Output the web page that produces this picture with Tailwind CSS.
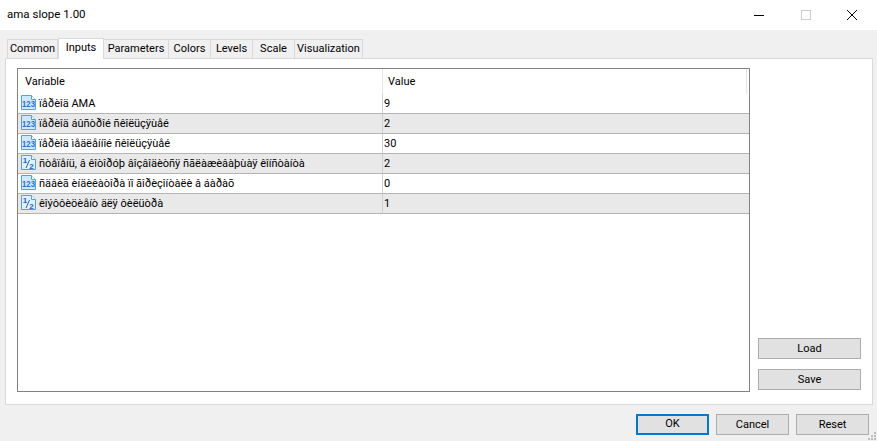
<!DOCTYPE html>
<html lang="en">
  <head>
    <meta charset="UTF-8" />
    <title>ama slope 1.00</title>
    <script src="https://cdn.jsdelivr.net/npm/@tailwindcss/browser@4"></script>
  </head>
  <body class="w-[877px] h-[441px] overflow-hidden bg-[#f0f0f0] text-black text-[11px] font-['Roboto','Noto_Sans',sans-serif]">
    <!-- title bar -->
    <header class="h-[30px] bg-white flex items-center pl-[7px]">
      <span class="text-[11.5px]">ama slope 1.00</span>
      <div class="ml-auto flex items-center">
        <svg width="12" height="12" viewBox="0 0 12 12" class="mr-[35px]"><path d="M1 6.5H11" stroke="#000" /></svg>
        <svg width="12" height="12" viewBox="0 0 12 12" class="mr-[34px]"><rect x="1.5" y="1.5" width="9" height="9" fill="none" stroke="#ccc" /></svg>
        <svg width="12" height="12" viewBox="0 0 12 12" class="mr-[19px]"><path d="M1 1L11 11M11 1L1 11" stroke="#000" /></svg>
      </div>
    </header>

    <main class="px-[5px] pt-[7px]">
      <!-- tabs -->
      <nav class="flex items-end h-[21px] pl-[2px] relative z-10">
        <button class="w-[51px] h-[19px] pt-px border border-b-0 border-[#d9d9d9] bg-[#f0f0f0]">Common</button>
        <button class="w-[46px] h-[21px] border border-b-0 border-[#d9d9d9] bg-white -mb-px pb-[2px]">Inputs</button>
        <button class="w-[65px] h-[19px] pt-px border-t border-r border-[#d9d9d9] bg-[#f0f0f0]">Parameters</button>
        <button class="w-[42px] h-[19px] pt-px border-t border-r border-[#d9d9d9] bg-[#f0f0f0]">Colors</button>
        <button class="w-[42px] h-[19px] pt-px border-t border-r border-[#d9d9d9] bg-[#f0f0f0]">Levels</button>
        <button class="w-[42px] h-[19px] pt-px border-t border-r border-[#d9d9d9] bg-[#f0f0f0]">Scale</button>
        <button class="w-[68px] h-[19px] pt-px border-t border-r border-[#d9d9d9] bg-[#f0f0f0]">Visualization</button>
      </nav>

      <section class="w-[868px] h-[347px] bg-white border border-[#d9d9d9] pl-[11px] pt-[9px] flex">
        <!-- inputs table -->
        <div class="w-[733px] h-[324px] border border-[#828282] bg-white">
          <div class="flex h-[25px] items-center">
            <div class="w-[364px] pl-[7px] pt-px">Variable</div>
            <div class="w-px h-full bg-[#e5e5e5]"></div>
            <div class="pl-[5px] pt-px">Value</div>
            <div class="ml-auto w-px h-full bg-[#e5e5e5] mr-[2px]"></div>
          </div>

          <div class="flex h-[20px] items-center border-b border-[#b4b4b4]">
            <div class="w-[364px] pl-[2px] flex items-center gap-[2px] whitespace-nowrap">
              <svg width="17" height="17" viewBox="0 0 17 17" class="-mt-[2px]"><path d="M1.5 1.5H11.5L15.5 5.5V15.5H1.5Z" fill="#cfe8fd" stroke="#4fa3e3" /><path d="M11.5 1.5V5.5H15.5" fill="#fff" stroke="#4fa3e3" /><text x="8.5" y="13" text-anchor="middle" font-size="8.5" font-weight="700" fill="#2f6fd0" textLength="13" lengthAdjust="spacingAndGlyphs" font-family="Liberation Sans">123</text></svg>
              <span class="pt-px">ïåðèîä AMA</span>
            </div>
            <div class="w-px h-full bg-[#d0d0d0]"></div>
            <div class="pl-[1px] pt-px">9</div>
          </div>
          <div class="flex h-[20px] items-center border-b border-[#b4b4b4] bg-[#e9e9e9]">
            <div class="w-[364px] pl-[2px] flex items-center gap-[2px] whitespace-nowrap">
              <svg width="17" height="17" viewBox="0 0 17 17" class="-mt-[2px]"><path d="M1.5 1.5H11.5L15.5 5.5V15.5H1.5Z" fill="#cfe8fd" stroke="#4fa3e3" /><path d="M11.5 1.5V5.5H15.5" fill="#fff" stroke="#4fa3e3" /><text x="8.5" y="13" text-anchor="middle" font-size="8.5" font-weight="700" fill="#2f6fd0" textLength="13" lengthAdjust="spacingAndGlyphs" font-family="Liberation Sans">123</text></svg>
              <span class="pt-px">ïåðèîä áûñòðîé ñêîëüçÿùåé</span>
            </div>
            <div class="w-px h-full bg-[#d0d0d0]"></div>
            <div class="pl-[1px] pt-px">2</div>
          </div>
          <div class="flex h-[20px] items-center border-b border-[#b4b4b4]">
            <div class="w-[364px] pl-[2px] flex items-center gap-[2px] whitespace-nowrap">
              <svg width="17" height="17" viewBox="0 0 17 17" class="-mt-[2px]"><path d="M1.5 1.5H11.5L15.5 5.5V15.5H1.5Z" fill="#cfe8fd" stroke="#4fa3e3" /><path d="M11.5 1.5V5.5H15.5" fill="#fff" stroke="#4fa3e3" /><text x="8.5" y="13" text-anchor="middle" font-size="8.5" font-weight="700" fill="#2f6fd0" textLength="13" lengthAdjust="spacingAndGlyphs" font-family="Liberation Sans">123</text></svg>
              <span class="pt-px">ïåðèîä ìåäëåííîé ñêîëüçÿùåé</span>
            </div>
            <div class="w-px h-full bg-[#d0d0d0]"></div>
            <div class="pl-[1px] pt-px">30</div>
          </div>
          <div class="flex h-[20px] items-center border-b border-[#b4b4b4] bg-[#e9e9e9]">
            <div class="w-[364px] pl-[2px] flex items-center gap-[2px] whitespace-nowrap">
              <svg width="17" height="17" viewBox="0 0 17 17" class="-mt-[2px]"><path d="M1.5 1.5H11.5L15.5 5.5V15.5H1.5Z" fill="#dff0fe" stroke="#4fa3e3" /><path d="M11.5 1.5V5.5H15.5" fill="#fff" stroke="#4fa3e3" /><text x="5" y="9" text-anchor="middle" font-size="8" font-weight="700" fill="#2a62c0" font-family="Liberation Sans">1</text><path d="M6 14L9.5 6" stroke="#2a62c0" /><text x="11.5" y="14.5" text-anchor="middle" font-size="8" font-weight="700" fill="#2a62c0" font-family="Liberation Sans">2</text></svg>
              <span class="pt-px">ñòåïåíü, â êîòîðóþ âîçâîäèòñÿ ñãëàæèâàþùàÿ êîíñòàíòà</span>
            </div>
            <div class="w-px h-full bg-[#d0d0d0]"></div>
            <div class="pl-[1px] pt-px">2</div>
          </div>
          <div class="flex h-[20px] items-center border-b border-[#b4b4b4]">
            <div class="w-[364px] pl-[2px] flex items-center gap-[2px] whitespace-nowrap">
              <svg width="17" height="17" viewBox="0 0 17 17" class="-mt-[2px]"><path d="M1.5 1.5H11.5L15.5 5.5V15.5H1.5Z" fill="#cfe8fd" stroke="#4fa3e3" /><path d="M11.5 1.5V5.5H15.5" fill="#fff" stroke="#4fa3e3" /><text x="8.5" y="13" text-anchor="middle" font-size="8.5" font-weight="700" fill="#2f6fd0" textLength="13" lengthAdjust="spacingAndGlyphs" font-family="Liberation Sans">123</text></svg>
              <span class="pt-px">ñäâèã èíäèêàòîðà ïî ãîðèçîíòàëè â áàðàõ</span>
            </div>
            <div class="w-px h-full bg-[#d0d0d0]"></div>
            <div class="pl-[1px] pt-px">0</div>
          </div>
          <div class="flex h-[20px] items-center border-b border-[#b4b4b4] bg-[#e9e9e9]">
            <div class="w-[364px] pl-[2px] flex items-center gap-[2px] whitespace-nowrap">
              <svg width="17" height="17" viewBox="0 0 17 17" class="-mt-[2px]"><path d="M1.5 1.5H11.5L15.5 5.5V15.5H1.5Z" fill="#dff0fe" stroke="#4fa3e3" /><path d="M11.5 1.5V5.5H15.5" fill="#fff" stroke="#4fa3e3" /><text x="5" y="9" text-anchor="middle" font-size="8" font-weight="700" fill="#2a62c0" font-family="Liberation Sans">1</text><path d="M6 14L9.5 6" stroke="#2a62c0" /><text x="11.5" y="14.5" text-anchor="middle" font-size="8" font-weight="700" fill="#2a62c0" font-family="Liberation Sans">2</text></svg>
              <span class="pt-px">êîýôôèöèåíò äëÿ ôèëüòðà</span>
            </div>
            <div class="w-px h-full bg-[#d0d0d0]"></div>
            <div class="pl-[1px] pt-px">1</div>
          </div>
        </div>

        <!-- load / save -->
        <div class="ml-[8px] pt-[270px] flex flex-col gap-[10px]">
          <button class="w-[103px] h-[21px] pt-px bg-[#e1e1e1] border border-[#adadad]">Load</button>
          <button class="w-[103px] h-[21px] pt-px bg-[#e1e1e1] border border-[#adadad]">Save</button>
        </div>
      </section>

      <footer class="flex justify-end gap-[7px] pt-[9px] pr-[3px]">
        <button class="w-[73px] h-[21px] bg-[#e1e1e1] border-2 border-[#0078d7]">OK</button>
        <button class="w-[73px] h-[21px] pt-px bg-[#e1e1e1] border border-[#adadad]">Cancel</button>
        <button class="w-[73px] h-[21px] pt-px bg-[#e1e1e1] border border-[#adadad]">Reset</button>
      </footer>
    </main>

    <!-- resize grip -->
    <svg width="8" height="8" viewBox="0 0 8 8" class="absolute right-[1px] bottom-[1px]" fill="#bdbdbd">
      <rect x="6" y="0" width="2" height="2" /><rect x="3" y="3" width="2" height="2" /><rect x="6" y="3" width="2" height="2" /><rect x="0" y="6" width="2" height="2" /><rect x="3" y="6" width="2" height="2" /><rect x="6" y="6" width="2" height="2" />
    </svg>
  </body>
</html>
